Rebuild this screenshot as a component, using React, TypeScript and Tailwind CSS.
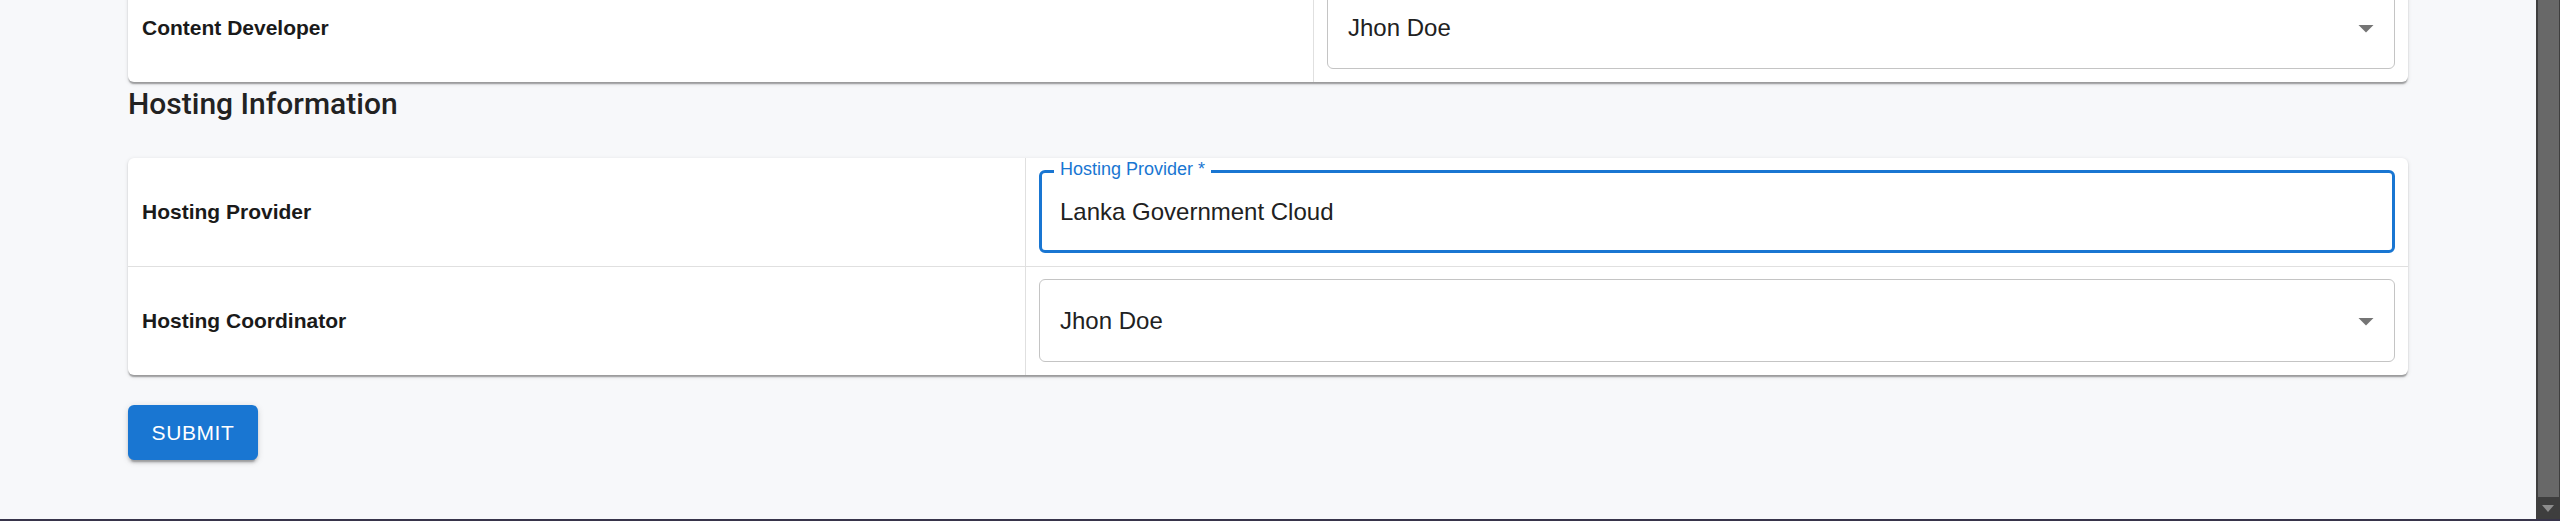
import React from 'react';

const DropArrow = () => (
    <svg width="36" height="36" viewBox="0 0 24 24" className="shrink-0 mr-[10px]">
        <path d="M7 10l5 5 5-5z" fill="#757575" />
    </svg>
);

const SelectBox: React.FC<{ value: string }> = ({ value }) => (
    <div className="flex h-[83px] items-center justify-between rounded-[6px] border border-[#c4c4c4] bg-white pl-[20px]">
        <span className="text-[24px] text-[#212121]">{value}</span>
        <DropArrow />
    </div>
);

const FocusedField: React.FC<{ label: string; value: string }> = ({ label, value }) => (
    <div className="relative flex h-[83px] items-center rounded-[6px] border-[3px] border-[#1976d2] bg-white pl-[18px]">
        <span className="absolute left-[12px] top-[-13px] bg-white px-[6px] text-[18px] leading-[18px] text-[#1976d2]">{label}</span>
        <span className="text-[24px] text-[#212121]">{value}</span>
    </div>
);

const Row: React.FC<{ label: string; labelWidth: string; children: React.ReactNode; last?: boolean }> = ({ label, labelWidth, children, last }) => (
    <div className={`flex ${last ? '' : 'border-b border-[#e0e0e0]'}`}>
        <div className={`${labelWidth} flex shrink-0 items-center border-r border-[#e0e0e0] pl-[14px]`}>
            <span className="text-[21px] font-bold text-[#1a1a1a]">{label}</span>
        </div>
        <div className="flex-1 px-[13px] pt-[12px] pb-[13px]">{children}</div>
    </div>
);

const cardShadow = 'shadow-[0_3px_1.5px_-1.5px_rgba(0,0,0,0.2),0_1.5px_1.5px_0_rgba(0,0,0,0.14),0_1.5px_4.5px_0_rgba(0,0,0,0.12)]';

export default function App() {
    return (
        <div className="flex h-[521px] w-full flex-col overflow-hidden bg-[#f7f8fa] font-['Liberation_Sans',Arial,sans-serif]">
            <div className="flex min-h-0 flex-1">
                <main className="min-w-0 flex-1 overflow-hidden">
                    <div className="flex flex-col px-[128px]">
                        <div className={`mt-[-26px] rounded-[6px] bg-white ${cardShadow}`}>
                            <Row label="Content Developer" labelWidth="w-[1186px]" last>
                                <SelectBox value="Jhon Doe" />
                            </Row>
                        </div>

                        <h2 className="h-[44px] font-['Roboto',sans-serif] text-[30px] font-medium leading-[44px] text-[#222222]">
                            Hosting Information
                        </h2>

                        <div className={`mt-[32px] rounded-[6px] bg-white ${cardShadow}`}>
                            <Row label="Hosting Provider" labelWidth="w-[898px]">
                                <FocusedField label="Hosting Provider *" value="Lanka Government Cloud" />
                            </Row>
                            <Row label="Hosting Coordinator" labelWidth="w-[898px]" last>
                                <SelectBox value="Jhon Doe" />
                            </Row>
                        </div>

                        <div className="mt-[30px]">
                            <button className="h-[55px] w-[130px] rounded-[6px] bg-[#1976d2] text-[21px] font-normal uppercase tracking-[0.6px] text-white shadow-[0_4.5px_1.5px_-3px_rgba(0,0,0,0.2),0_3px_3px_0_rgba(0,0,0,0.14),0_1.5px_7.5px_0_rgba(0,0,0,0.12)]">
                                Submit
                            </button>
                        </div>
                    </div>
                </main>

                <div className="flex w-[24px] shrink-0 flex-col bg-[#3e3e3e]">
                    <div className="ml-[2px] mr-[1px] flex-1 bg-[#686868]" />
                    <div className="flex h-[22px] items-center justify-center">
                        <svg width="12" height="7" viewBox="0 0 12 7">
                            <path d="M0 0h12L6 7z" fill="#8c8c8c" />
                        </svg>
                    </div>
                </div>
            </div>
            <div className="h-[2px] bg-[#37344a]" />
        </div>
    );
}
